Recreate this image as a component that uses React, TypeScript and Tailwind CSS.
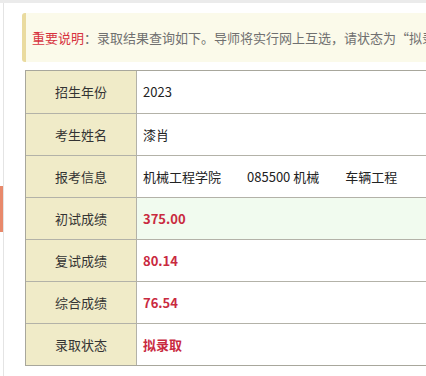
const rows: { label: string; value: React.ReactNode; red?: boolean; bg?: string }[] = [
  { label: "招生年份", value: "2023" },
  { label: "考生姓名", value: "漆肖" },
  {
    label: "报考信息",
    value: (
      <span className="flex gap-[26px]">
        <span>机械工程学院</span>
        <span>085500 机械</span>
        <span>车辆工程</span>
      </span>
    ),
  },
  { label: "初试成绩", value: "375.00", red: true, bg: "bg-[#f1fbef]" },
  { label: "复试成绩", value: "80.14", red: true },
  { label: "综合成绩", value: "76.54", red: true },
  { label: "录取状态", value: "拟录取", red: true },
];

export default function App() {
  return (
    <div
      className="w-[426px] h-[376px] overflow-hidden bg-white border-t-[3px] border-[#ebebeb] flex"
      style={{ fontFamily: '"Noto Sans CJK SC", "Noto Sans", sans-serif' }}
    >
      <div className="w-[4px] shrink-0 border-r border-[#e4e4e4]">
        <div className="mt-[183px] h-[46px] w-[3px] bg-[#e8896b]" />
      </div>
      <div className="flex-1 pl-[18px] pt-[10px] min-w-0">
        <div className="h-[49px] bg-[#fbfaea] border-l-4 border-[#eadb9f] rounded-l-[3px] pl-[6px] flex items-center whitespace-nowrap overflow-hidden text-[13px] text-[#707070]">
          <span className="text-[#d7333f]">重要说明</span>
          <span>：录取结果查询如下。导师将实行网上互选，请状态为“拟录取”的考生</span>
        </div>
        <div className="mt-[8px] ml-[3px] w-[420px] border border-[#a8a79c] text-[13px]">
          {rows.map((r, i) => (
            <div
              key={r.label}
              className={`flex h-[42px] ${i > 0 ? "border-t border-[#b3b2a8]" : ""}`}
            >
              <div className="w-[111px] shrink-0 bg-[#f0ebc8] border-r border-[#b3b2a8] flex items-center justify-center text-[#333]">
                {r.label}
              </div>
              <div
                className={`flex-1 flex items-center pl-[6px] ${r.bg ?? "bg-white"} ${
                  r.red ? "text-[#c92a3f] font-bold" : "text-[#222]"
                }`}
              >
                {r.value}
              </div>
            </div>
          ))}
        </div>
      </div>
    </div>
  );
}
